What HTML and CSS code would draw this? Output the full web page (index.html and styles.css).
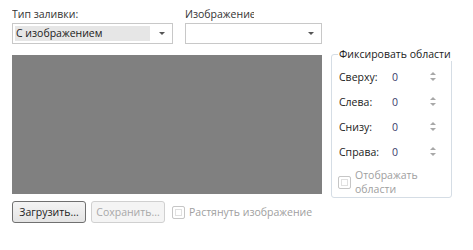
FILE: index.html
```html
<!DOCTYPE html>
<html lang="ru">
<head>
  <meta charset="UTF-8">
  <title>Заливка</title>
  <link rel="stylesheet" href="styles.css">
</head>
<body>
  <div class="panel">
    <div class="top-row">
      <div class="field field-type">
        <label>Тип заливки:</label>
        <div class="combo">
          <span class="combo-value">С изображением</span>
          <span class="combo-arrow"></span>
        </div>
      </div>
      <div class="field field-image">
        <label>Изображение</label>
        <div class="combo">
          <span class="combo-value empty"></span>
          <span class="combo-arrow"></span>
        </div>
      </div>
    </div>

    <div class="main-row">
      <div class="preview"></div>
      <div class="group">
        <div class="group-title">Фиксировать области</div>
        <div class="spin-row"><span class="spin-label">Сверху:</span><span class="spin-value">0</span><span class="spin"><i class="up"></i><i class="down"></i></span></div>
        <div class="spin-row"><span class="spin-label">Слева:</span><span class="spin-value">0</span><span class="spin"><i class="up"></i><i class="down"></i></span></div>
        <div class="spin-row"><span class="spin-label">Снизу:</span><span class="spin-value">0</span><span class="spin"><i class="up"></i><i class="down"></i></span></div>
        <div class="spin-row"><span class="spin-label">Справа:</span><span class="spin-value">0</span><span class="spin"><i class="up"></i><i class="down"></i></span></div>
        <div class="check disabled group-check">
          <span class="box"></span>
          <span class="check-text">Отображать<br>области</span>
        </div>
      </div>
    </div>

    <div class="bottom-row">
      <button class="btn">Загрузить...</button>
      <button class="btn" disabled>Сохранить...</button>
      <div class="check disabled">
        <span class="box"></span>
        <span class="check-text">Растянуть изображение</span>
      </div>
    </div>
  </div>
</body>
</html>
```

FILE: styles.css
```css
* { box-sizing: border-box; }
body {
  margin: 0;
  background: #fff;
  font-family: 'Open Sans', 'Noto Sans', sans-serif;
  font-size: 10.5px;
  color: #1b1b1b;
}
.panel {
  padding: 6px 0 0 12px;
  width: 473px;
  height: 250px;
}
.top-row {
  display: flex;
  gap: 12px;
}
.field label {
  display: block;
  height: 16px;
  line-height: 16px;
  white-space: nowrap;
  overflow: hidden;
  color: #333;
}
.field-type { width: 161px; }
.field-image { width: 137px; }
.field-image label { width: 69px; }
.combo {
  margin-top: 1px;
  height: 21px;
  border: 1px solid #c8c8c8;
  display: flex;
  align-items: center;
  padding: 2px;
}
.combo-value {
  height: 15px;
  line-height: 15px;
  padding-left: 1px;
  width: 135px;
  background: #e6e6e6;
}
.combo-value.empty { background: none; width: 111px; }
.combo-arrow {
  margin-left: 9px;
  width: 0;
  height: 0;
  border-left: 3px solid transparent;
  border-right: 3px solid transparent;
  border-top: 3px solid #555;
}

.main-row {
  display: flex;
  margin-top: 3px;
}
.preview {
  margin-top: 8px;
  width: 310px;
  height: 139px;
  background: #808080;
}
.group {
  position: relative;
  flex: none;
  margin: 7px 0 0 9px;
  padding: 9px 0 0 7px;
  width: 121px;
  height: 144px;
  border: 1px solid #d5dde5;
  border-radius: 3px;
}
.group-title {
  position: absolute;
  top: -8px;
  left: 6px;
  padding: 0 1px;
  line-height: 14px;
  white-space: nowrap;
  background: #fff;
  color: #1b1b1b;
}
.spin-row {
  display: flex;
  align-items: center;
  height: 25px;
}
.spin-label { width: 53px; }
.spin-value { width: 38px; color: #3a3a6a; }
.spin {
  display: flex;
  flex-direction: column;
  gap: 3px;
  width: 7px;
}
.spin i {
  width: 0;
  height: 0;
  border-left: 3px solid transparent;
  border-right: 3px solid transparent;
}
.spin .up { border-bottom: 3px solid #a8a8a8; }
.spin .down { border-top: 3px solid #a8a8a8; }

.check {
  display: flex;
  align-items: center;
  gap: 4px;
}
.check .box {
  width: 13px;
  height: 13px;
  border: 1px solid #c6c6c6;
  border-radius: 2px;
  box-shadow: inset 0 0 0 2px #fff, inset 0 0 0 3px #e0e0e0;
  flex: none;
}
.check.disabled { color: #a0a0a0; }
.group-check {
  margin-top: 4px;
  margin-left: -1px;
  line-height: 14px;
}

.bottom-row {
  display: flex;
  align-items: center;
  gap: 5px;
  margin-top: 3px;
}
.btn {
  font-family: inherit;
  font-size: 10.5px;
  width: 74px;
  height: 22px;
  padding: 0;
  border: 1px solid #707070;
  border-radius: 3px;
  background: linear-gradient(#f4f4f4, #e4e4e4);
  color: #1b1b1b;
}
.btn:disabled {
  border-color: #d0d0d0;
  background: #f4f4f4;
  color: #a8a8a8;
}
.bottom-row .check { margin-left: 2px; }
```
